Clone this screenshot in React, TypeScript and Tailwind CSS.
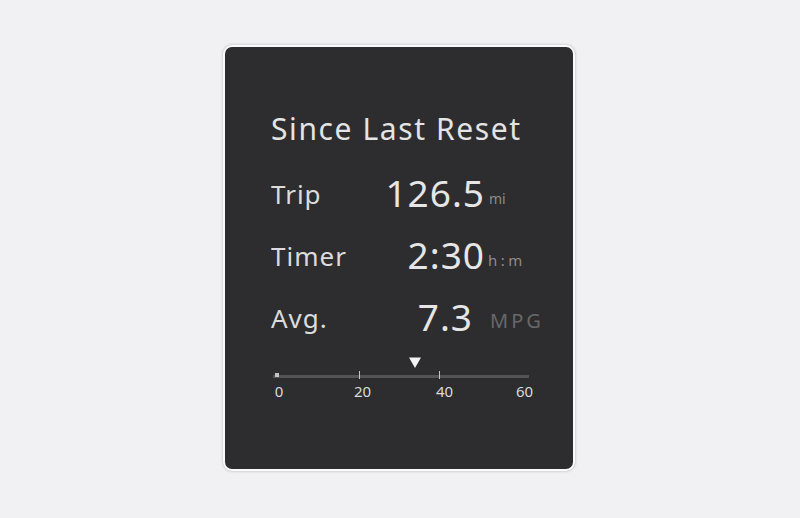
const rows = [
  { label: "Trip", value: "126.5", unit: "mi", unitClass: "ml-[4px] text-[14px] text-[#8c8c8c]", valueW: "w-[104px]" },
  { label: "Timer", value: "2:30", unit: "h:m", unitClass: "ml-[3px] text-[15px] tracking-[3.5px] text-[#8c8c8c]", valueW: "w-[104px]" },
  { label: "Avg.", value: "7.3", unit: "MPG", unitClass: "ml-[17px] text-[20px] tracking-[3px] text-[#686868]", valueW: "w-[92px]" },
];

const ticks = [
  { label: "0", left: "left-[2px]" },
  { label: "20", left: "left-[83px]" },
  { label: "40", left: "left-[165px]" },
  { label: "60", left: "left-[245px]" },
];

export default function App() {
  return (
    <div className="flex h-[518px] w-[800px] items-start justify-center bg-[#f1f1f3] pt-[45px] font-['Noto_Sans',sans-serif]">
      <div className="ml-[-2px] flex h-[426px] w-[352px] flex-col rounded-[9px] border-2 border-[#fafafa] bg-[#2d2d2f] pl-[46px] pt-[62px] shadow-[0_0_3px_rgba(0,0,0,0.25)]">
        <h1 className="text-[30px] leading-[40px] tracking-[1.6px] text-[#e4e4e4]">Since Last Reset</h1>

        <div className="mt-[13px] flex w-[290px] flex-col gap-[20px]">
          {rows.map((r) => (
            <div key={r.label} className="flex h-[42px] items-baseline">
              <span className="w-[110px] text-[26px] tracking-[1px] text-[#dcdcdc]">{r.label}</span>
              <span
                className={`translate-y-[3px] text-right text-[37px] tracking-[1px] text-[#e6e6e6] ${r.valueW}`}
              >
                {r.value}
              </span>
              <span className={r.unitClass}>{r.unit}</span>
            </div>
          ))}
        </div>

        {/* scale */}
        <div className="relative mt-[24px] h-[48px] w-[260px]">
          <div className="absolute left-[2px] top-[23px] h-[3px] w-[256px] bg-[#535355]" />
          <div className="absolute left-[4px] top-[21px] h-[4px] w-[4px] bg-[#c4c4c4]" />
          <div className="absolute left-[88px] top-[19px] h-[8px] w-[1px] bg-[#c4c4c4]" />
          <div className="absolute left-[168px] top-[19px] h-[8px] w-[1px] bg-[#c4c4c4]" />
          <svg className="absolute left-[137px] top-[4px]" width="14" height="13" viewBox="0 0 14 13">
            <path d="M1 1.5h12L7 12z" fill="#f2f2f2" />
          </svg>
          {ticks.map((t) => (
            <span
              key={t.label}
              className={`absolute top-[30px] w-[12px] text-center text-[15px] leading-[18px] text-[#dadada] ${t.left}`}
            >
              <span className="inline-block whitespace-nowrap">{t.label}</span>
            </span>
          ))}
        </div>
      </div>
    </div>
  );
}
